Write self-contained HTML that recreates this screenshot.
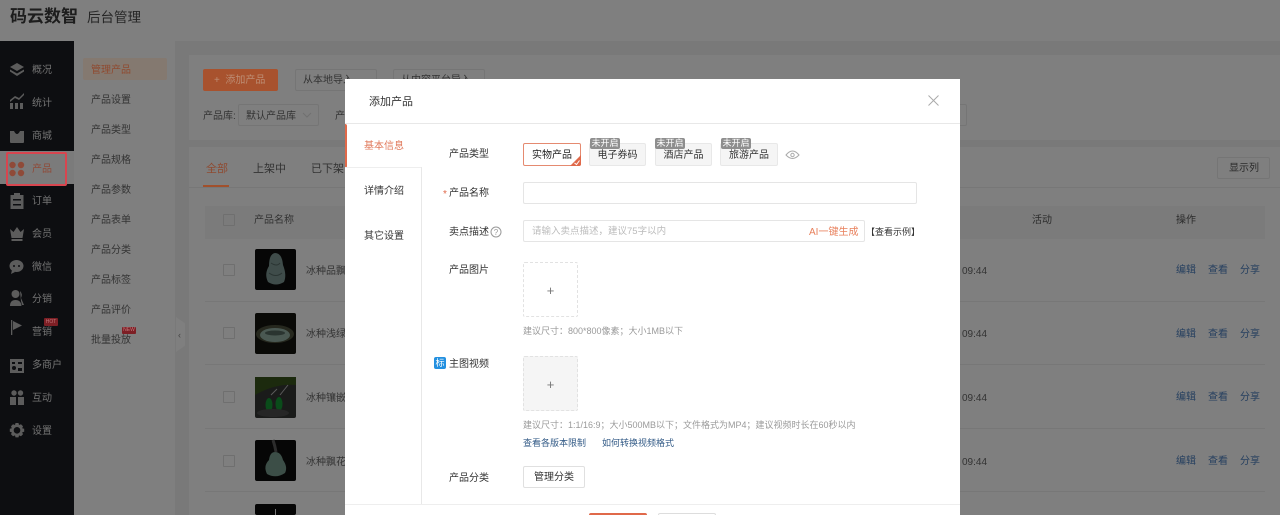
<!DOCTYPE html>
<html lang="zh"><head><meta charset="utf-8"><title>添加产品</title>
<style>
*{box-sizing:border-box}
html,body{margin:0;padding:0;width:1280px;height:515px;overflow:hidden;background:#797979;font-family:"Liberation Sans","Noto Sans CJK SC",sans-serif;color:#2a2a2a}
#w{position:absolute;left:0;top:0;width:1280px;height:515px;overflow:hidden;filter:blur(.35px)}
.a{position:absolute}
.t{position:absolute;white-space:nowrap;line-height:12px;font-size:10px;margin-top:1px}
.m{color:#262626}
.n{color:#747474}
.g{color:#333}
.b{color:#253f5f}
.f{color:#333}
.l{color:#325a86;font-size:9px}
.h{color:#9a9a9a;font-size:9px}
.chip{position:absolute;top:143px;height:23px;background:#f5f5f5;border:1px solid #e8e8e8;border-radius:2px;font-size:10px;line-height:22px;text-align:center;color:#333;padding-top:1px}
.off{position:absolute;top:138px;width:30px;height:11px;background:#8e8e8e;color:#fff;font-size:9px;line-height:11px;text-align:center;border-radius:2px}
.box{position:absolute;width:55px;height:55px;border:1px dashed #e2e2e2;border-radius:2px;font-size:13px;line-height:55px;text-align:center;color:#777;font-weight:300}
</style></head><body><div id="w">
<!-- header -->
<div class="a" style="left:0;top:0;width:1280px;height:41px;background:#7f7f7f"></div>
<div class="t" style="left:10px;top:6px;font-size:17px;line-height:20px;font-weight:700;color:#1d1d1d">码云数智</div>
<div class="t" style="left:87px;top:9px;font-size:13.5px;line-height:16px;color:#262626">后台管理</div>
<!-- sidebar -->
<div class="a" style="left:0;top:41px;width:74px;height:474px;background:#0d0e11"></div>
<div class="a" style="left:0;top:151px;width:74px;height:33px;background:#7b7b7b"></div>
<div class="a" style="left:6px;top:152px;width:61px;height:34px;border:2px solid #d8454f;border-radius:2px"></div>
<svg class="a" style="left:9px;top:62px" width="16" height="380" viewBox="0 0 16 380" fill="#5c5c5c">
<path d="M8 1 15 5 8 9 1 5z"/><path d="M1 7.500 8 11.500 15 7.500 15 9.500 8 14 1 9.500z"/>
<path d="M1 41h3v6H1zM6 41h3v6H6zM11 41h3v6h-3zM1 38l5-4 4 2 5-5v2l-5 5-4-2-5 4z"/>
<path d="M1 69h14v11q0 1-1 1H2q-1 0-1-1z"/><path d="M5 69q3 6 6 0z" fill="#0d0e11"/>
<circle cx="3.500" cy="103" r="3.200" fill="#8f4a38"/><circle cx="12" cy="103" r="3.200" fill="#8f4a38"/><circle cx="3.500" cy="111" r="3.200" fill="#8f4a38"/><circle cx="12" cy="111" r="3.200" fill="#8f4a38"/>
<path d="M1.500 133h13v14h-13z"/><path d="M5 131h6v3H5z"/><path d="M4 137h8v1.500H4zM4 142h8v1.500H4z" fill="#0d0e11"/>
<path d="M1 167l3.500 3L8 165l3.500 5 3.500-3-1.500 9h-11zM2.500 177h11v2h-11z"/>
<ellipse cx="7.500" cy="204" rx="7" ry="6"/><path d="M3 208l-1 4 4-2z"/><circle cx="5" cy="204" r="1" fill="#0d0e11"/><circle cx="10" cy="204" r="1" fill="#0d0e11"/>
<circle cx="6.500" cy="232" r="4"/><path d="M1 244q0-6 5.500-6t6 6z"/><path d="M11 229q3 3 1 7l3 7h-2l-1-4z"/>
<path d="M2 258h1.300v15H2z"/><path d="M4 259l9 4.500-9 4.500z"/>
<path d="M1 297h14v14H1z"/><circle cx="5" cy="306" r="2" fill="#0d0e11"/><path d="M9 300h4v2H9zM3 300h3v2H3zM9 306h4v3H9z" fill="#0d0e11"/>
<circle cx="5" cy="331" r="2.700"/><circle cx="11.500" cy="331" r="2.700"/><path d="M1 335h6v8H1zM9 335h6v8H9z"/>
<path fill-rule="evenodd" d="M6.500 361h3l.5 2 2-.8 2 2-.8 2 2 .5v3l-2 .5.8 2-2 2-2-.8-.5 2h-3l-.5-2-2 .8-2-2 .8-2-2-.5v-3l2-.5-.8-2 2-2 2 .8zM8 365a3.300 3.300 0 1 0 .01 0z"/>
</svg>
<div class="t n" style="left:32px;top:64px">概况</div>
<div class="t n" style="left:32px;top:97px">统计</div>
<div class="t n" style="left:32px;top:130px">商城</div>
<div class="t" style="left:32px;top:163px;color:#8f4a38">产品</div>
<div class="t n" style="left:32px;top:195px">订单</div>
<div class="t n" style="left:32px;top:228px">会员</div>
<div class="t n" style="left:32px;top:261px">微信</div>
<div class="t n" style="left:32px;top:293px">分销</div>
<div class="t n" style="left:32px;top:326px">营销</div>
<div class="a" style="left:44px;top:318px;width:14px;height:8px;background:#7d1f25;border-radius:1px;color:#c0787c;font-size:5px;line-height:8px;text-align:center">HOT</div>
<div class="t n" style="left:32px;top:359px">多商户</div>
<div class="t n" style="left:32px;top:392px">互动</div>
<div class="t n" style="left:32px;top:425px">设置</div>
<!-- submenu -->
<div class="a" style="left:74px;top:41px;width:101px;height:474px;background:#7f7f7f"></div>
<div class="a" style="left:83px;top:58px;width:84px;height:22px;background:#847970;border-radius:2px"></div>
<div class="t" style="left:91px;top:64px;color:#8f4a30">管理产品</div>
<div class="t g" style="left:91px;top:94px">产品设置</div>
<div class="t g" style="left:91px;top:124px">产品类型</div>
<div class="t g" style="left:91px;top:154px">产品规格</div>
<div class="t g" style="left:91px;top:184px">产品参数</div>
<div class="t g" style="left:91px;top:214px">产品表单</div>
<div class="t g" style="left:91px;top:244px">产品分类</div>
<div class="t g" style="left:91px;top:274px">产品标签</div>
<div class="t g" style="left:91px;top:304px">产品评价</div>
<div class="t g" style="left:91px;top:334px">批量投放</div>
<div class="a" style="left:122px;top:327px;width:14px;height:7px;background:#7d1f25;border-radius:1px;color:#c0787c;font-size:5px;line-height:7px;text-align:center">NEW</div>
<div class="a" style="left:176px;top:317px;width:9px;height:35px;background:#7f7f7f;clip-path:polygon(0 0,100% 18%,100% 82%,0 100%)"></div>
<div class="t" style="left:178px;top:328px;font-size:9px;color:#444">‹</div>
<!-- cards -->
<div class="a" style="left:189px;top:55px;width:1091px;height:85px;background:#7f7f7f"></div>
<div class="a" style="left:189px;top:147px;width:1091px;height:368px;background:#7f7f7f"></div>
<div class="a" style="left:203px;top:69px;width:75px;height:22px;background:#a8522e;border-radius:2px"></div>
<div class="t" style="left:214px;top:74px;color:#bd8d74">+&nbsp; 添加产品</div>
<div class="a" style="left:295px;top:69px;width:82px;height:22px;border:1px solid #757575;border-radius:2px"></div>
<div class="t g" style="left:303px;top:74px">从本地导入</div>
<div class="a" style="left:393px;top:69px;width:92px;height:22px;border:1px solid #757575;border-radius:2px"></div>
<div class="t" style="left:203px;top:110px;color:#333">产品库:</div>
<div class="a" style="left:238px;top:104px;width:81px;height:22px;border:1px solid #757575;border-radius:2px"></div>
<div class="t g" style="left:246px;top:110px">默认产品库</div>
<svg class="a" style="left:302px;top:112px" width="10" height="6" fill="none" stroke="#707070"><path d="M1 1l4 4 4-4"/></svg>
<div class="t" style="left:335px;top:110px;color:#333">产</div>
<div class="a" style="left:940px;top:104px;width:27px;height:22px;border:1px solid #757575;border-radius:0 2px 2px 0;border-left:0"></div>
<div class="t" style="left:206px;top:162px;font-size:11px;color:#8f4a30">全部</div>
<div class="a" style="left:203px;top:185px;width:26px;height:2px;background:#a1502c"></div>
<div class="t g" style="left:253px;top:162px;font-size:11px">上架中</div>
<div class="t g" style="left:311px;top:162px;font-size:11px">已下架</div>
<div class="a" style="left:189px;top:187px;width:1091px;height:1px;background:#777"></div>
<div class="a" style="left:1217px;top:157px;width:53px;height:22px;border:1px solid #757575;border-radius:2px"></div>
<div class="t" style="left:1229px;top:162px;color:#2b2b2b">显示列</div>
<div class="a" style="left:205px;top:206px;width:1060px;height:33px;background:#7b7b7b"></div>
<div class="a" style="left:223px;top:214px;width:12px;height:12px;border:1px solid #6f6f6f;border-radius:1px"></div>
<div class="t g" style="left:254px;top:214px">产品名称</div>
<div class="t" style="left:1032px;top:214px;color:#2b2b2b">活动</div>
<div class="t" style="left:1176px;top:214px;color:#2b2b2b">操作</div>
<!-- rows -->
<div class="a" style="left:223px;top:264px;width:12px;height:12px;border:1px solid #6f6f6f;border-radius:1px"></div>
<div class="a" style="left:223px;top:327px;width:12px;height:12px;border:1px solid #6f6f6f;border-radius:1px"></div>
<div class="a" style="left:223px;top:391px;width:12px;height:12px;border:1px solid #6f6f6f;border-radius:1px"></div>
<div class="a" style="left:223px;top:455px;width:12px;height:12px;border:1px solid #6f6f6f;border-radius:1px"></div>
<div class="a" style="left:205px;top:301px;width:1060px;height:1px;background:#777"></div>
<div class="a" style="left:205px;top:364px;width:1060px;height:1px;background:#777"></div>
<div class="a" style="left:205px;top:428px;width:1060px;height:1px;background:#777"></div>
<div class="a" style="left:205px;top:491px;width:1060px;height:1px;background:#777"></div>
<svg class="a" style="left:255px;top:249px" width="41" height="266" viewBox="0 0 41 266">
<rect width="41" height="41" rx="2" fill="#060606"/><path d="M20 4q7 0 8 12 4 10 1 17-8 5-16 0-4-8 1-16 0-12 6-13z" fill="#3f4c4a"/><path d="M16 14q6 4 9 0M14 24q7 5 13 0" stroke="#2a3432" fill="none"/>
<rect y="64" width="41" height="41" rx="2" fill="#0a0a07"/><ellipse cx="20" cy="85" rx="19" ry="9" fill="#26281e"/><ellipse cx="20" cy="86" rx="15" ry="7" fill="#4a5852"/><ellipse cx="20" cy="84" rx="10" ry="2.500" fill="#2a3430"/>
<rect y="128" width="41" height="41" rx="2" fill="#1a1b1a"/><path d="M0 128h41v8q-20-2-41 10z" fill="#1c2a0e"/><ellipse cx="14" cy="156" rx="3.500" ry="7" fill="#0a4c1a"/><ellipse cx="24" cy="155" rx="3.500" ry="7" fill="#0a4c1a"/><path d="M16 146l6-6M25 146l8-10" stroke="#5a5a5a" fill="none"/><ellipse cx="18" cy="164" rx="16" ry="4" fill="#262626"/>
<rect y="191" width="41" height="41" rx="2" fill="#060606"/><path d="M20 203q6 0 8 8 5 7 2 13-9 6-18 1-4-8 2-14 1-8 6-8z" fill="#3c4e47"/><path d="M18 191q2 6 3 12" stroke="#2c2c2c" stroke-width="3" fill="none"/>
<rect y="255" width="41" height="11" rx="2" fill="#060606"/><path d="M20 260h1v6h-1z" fill="#777"/>
</svg>
<div class="t g" style="left:306px;top:265px">冰种品飘花</div>
<div class="t g" style="left:306px;top:328px">冰种浅绿玉</div>
<div class="t g" style="left:306px;top:392px">冰种镶嵌玉</div>
<div class="t g" style="left:306px;top:456px">冰种飘花玉</div>
<div class="t g" style="left:962px;top:265px">09:44</div><div class="t g" style="left:962px;top:328px">09:44</div><div class="t g" style="left:962px;top:392px">09:44</div><div class="t g" style="left:962px;top:456px">09:44</div>
<div class="t b" style="left:1176px;top:264px">编辑</div><div class="t b" style="left:1208px;top:264px">查看</div><div class="t b" style="left:1240px;top:264px">分享</div>
<div class="t b" style="left:1176px;top:328px">编辑</div><div class="t b" style="left:1208px;top:328px">查看</div><div class="t b" style="left:1240px;top:328px">分享</div>
<div class="t b" style="left:1176px;top:391px">编辑</div><div class="t b" style="left:1208px;top:391px">查看</div><div class="t b" style="left:1240px;top:391px">分享</div>
<div class="t b" style="left:1176px;top:455px">编辑</div><div class="t b" style="left:1208px;top:455px">查看</div><div class="t b" style="left:1240px;top:455px">分享</div>
<div class="t g" style="left:401px;top:74px">从内容平台导入</div>
<!-- modal -->
<div class="a" style="left:345px;top:79px;width:615px;height:436px;background:#fff"></div>
<div class="t" style="left:369px;top:94px;font-size:11px;line-height:14px;color:#333">添加产品</div>
<svg class="a" style="left:927px;top:94px" width="13" height="13" fill="none" stroke="#aaa"><path d="M1.500 1.500l10 10M11.500 1.500l-10 10"/></svg>
<div class="a" style="left:345px;top:123px;width:615px;height:1px;background:#e8e8e8"></div>
<div class="a" style="left:345px;top:124px;width:2px;height:44px;background:#e0694a;border-radius:0 2px 2px 0"></div>
<div class="a" style="left:345px;top:167px;width:77px;height:1px;background:#eee"></div>
<div class="a" style="left:421px;top:167px;width:1px;height:337px;background:#e8e8e8"></div>
<div class="t" style="left:364px;top:140px;color:#e0785a">基本信息</div>
<div class="t f" style="left:364px;top:185px">详情介绍</div>
<div class="t f" style="left:364px;top:230px">其它设置</div>
<div class="t f" style="left:449px;top:148px">产品类型</div>
<div class="a" style="left:523px;top:143px;width:58px;height:23px;background:#fff;border:1px solid #e58a70;border-radius:2px;font-size:10px;line-height:22px;text-align:center;color:#222;padding-top:1px">实物产品</div>
<svg class="a" style="left:570px;top:155px" width="11" height="11"><path d="M11 0v9q0 2-2 2H0z" fill="#e0694a"/><path d="M4.500 8l2 1.500L9.500 5.500" stroke="#fff" fill="none"/></svg>
<div class="chip" style="left:589px;width:57px">电子券码</div>
<div class="chip" style="left:655px;width:57px">酒店产品</div>
<div class="chip" style="left:720px;width:58px">旅游产品</div>
<div class="off" style="left:590px">未开启</div>
<div class="off" style="left:655px">未开启</div>
<div class="off" style="left:721px">未开启</div>
<svg class="a" style="left:785px;top:149px" width="15" height="12" fill="none" stroke="#aaa"><path d="M1 6q6.500-8 13 0-6.500 7-13 0z"/><circle cx="7.500" cy="6" r="1.700"/></svg>
<div class="t" style="left:443px;top:188px;color:#e0694a">*</div>
<div class="t f" style="left:449px;top:187px">产品名称</div>
<div class="a" style="left:523px;top:182px;width:394px;height:22px;border:1px solid #e5e5e5;border-radius:2px"></div>
<div class="t f" style="left:449px;top:226px">卖点描述</div>
<svg class="a" style="left:490px;top:226px" width="12" height="12" fill="none" stroke="#999"><circle cx="6" cy="6" r="5"/><text x="6" y="9" font-size="8" text-anchor="middle" fill="#999" stroke="none" font-family="Liberation Sans">?</text></svg>
<div class="a" style="left:523px;top:220px;width:342px;height:22px;border:1px solid #e5e5e5;border-radius:2px"></div>
<div class="t" style="left:532px;top:225px;color:#bbb;font-size:9.500px">请输入卖点描述，建议75字以内</div>
<div class="t" style="left:809px;top:226px;color:#e8805c">AI一键生成</div>
<div class="t f" style="left:866px;top:225px;font-size:9px;color:#333">【查看示例】</div>
<div class="t f" style="left:449px;top:264px">产品图片</div>
<div class="box" style="left:523px;top:262px">+</div>
<div class="t h" style="left:523px;top:324px">建议尺寸：800*800像素；大小1MB以下</div>
<div class="a" style="left:434px;top:357px;width:12px;height:12px;background:#2390e0;border-radius:2px;color:#fff;font-size:9px;line-height:12px;text-align:center">标</div>
<div class="t f" style="left:449px;top:358px">主图视频</div>
<div class="box" style="left:523px;top:356px;background:#f5f5f5">+</div>
<div class="t h" style="left:523px;top:418px">建议尺寸：1:1/16:9；大小500MB以下；文件格式为MP4；建议视频时长在60秒以内</div>
<div class="t l" style="left:523px;top:436px">查看各版本限制</div>
<div class="t l" style="left:602px;top:436px">如何转换视频格式</div>
<div class="t f" style="left:449px;top:472px">产品分类</div>
<div class="a" style="left:523px;top:466px;width:62px;height:22px;border:1px solid #e0e0e0;border-radius:2px;font-size:10px;line-height:21px;text-align:center;color:#333">管理分类</div>
<div class="a" style="left:345px;top:504px;width:615px;height:1px;background:#eee"></div>
<div class="a" style="left:589px;top:513px;width:58px;height:2px;background:#e0694a;border-radius:2px 2px 0 0"></div>
<div class="a" style="left:658px;top:513px;width:58px;height:2px;border:1px solid #ddd;border-bottom:0;border-radius:2px 2px 0 0"></div>
</div></body></html>
